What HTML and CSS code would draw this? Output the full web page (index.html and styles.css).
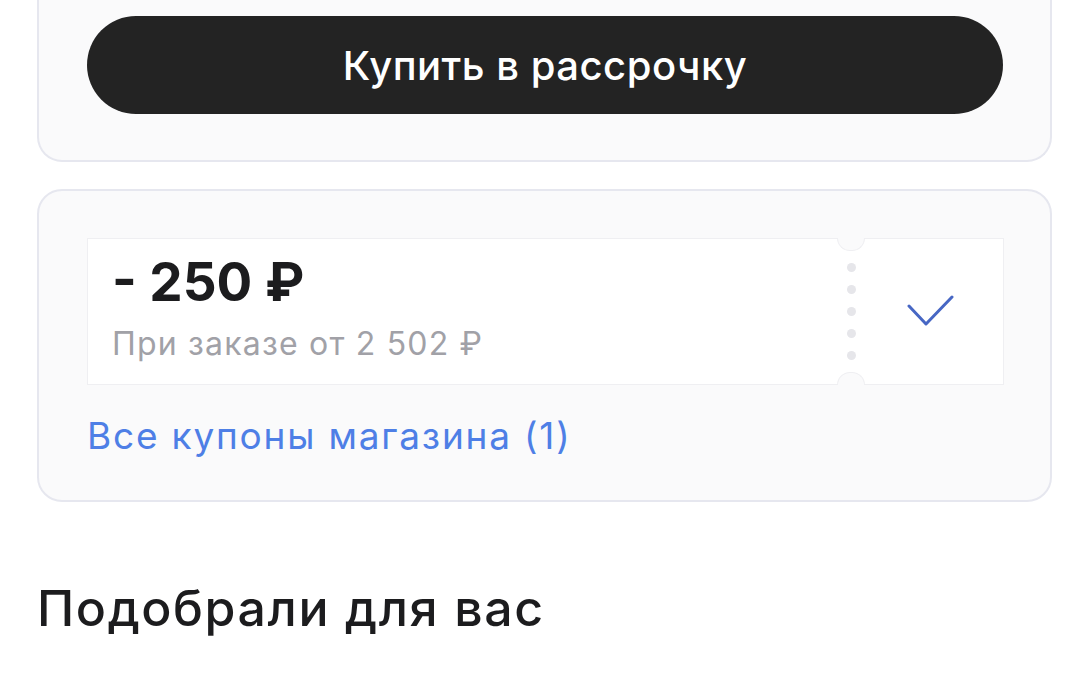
FILE: index.html
```html
<!DOCTYPE html>
<html lang="ru">
<head>
    <meta charset="UTF-8">
    <meta name="viewport" content="width=device-width, initial-scale=1.0">
    <title>Корзина</title>
    <link rel="stylesheet" href="styles.css">
</head>
<body>
<div class="page">
    <div class="card card-top">
        <button class="buy-btn">Купить в рассрочку</button>
    </div>

    <div class="card card-coupons">
        <div class="coupon">
            <div class="coupon-info">
                <div class="coupon-value">- 250 ₽</div>
                <div class="coupon-cond">При заказе от 2 502 ₽</div>
            </div>
            <div class="coupon-perf">
                <span class="dot"></span>
                <span class="dot"></span>
                <span class="dot"></span>
                <span class="dot"></span>
                <span class="dot"></span>
            </div>
            <div class="coupon-check">
                <svg width="48" height="36" viewBox="0 0 48 36" fill="none">
                    <path d="M3 12 L20 30 L46 3" stroke="#4767c4" stroke-width="3" stroke-linecap="round" stroke-linejoin="round"/>
                </svg>
            </div>
        </div>
        <a href="#" class="coupons-link">Все купоны магазина (1)</a>
    </div>

    <h2 class="section-title">Подобрали для вас</h2>
</div>
</body>
</html>
```

FILE: styles.css
```css
/* общие стили */
body {
    margin: 0;
    padding: 0;
    background: #ffffff;
    font-family: 'Inter', 'Noto Sans', sans-serif;
    color: #1c1c1e;
}

.page {
    padding: 0 38px 0 37px;
}

.card {
    background: #fafafb;
    border: 2px solid #e6e7ef;
    border-radius: 25px;
}

.card-top {
    border-top: none;
    border-top-left-radius: 0;
    border-top-right-radius: 0;
    padding: 16px 47px 46px 48px;
}

.buy-btn {
    display: block;
    width: 100%;
    height: 98px;
    border: none;
    border-radius: 49px;
    background: #232323;
    color: #ffffff;
    font-family: 'Inter', 'Noto Sans', sans-serif;
    font-size: 40px;
    font-weight: 500;
    letter-spacing: 0.5px;
    cursor: pointer;
}

.card-coupons {
    margin-top: 27px;
    padding: 47px 46px 41px 48px;
}

/* купон */
.coupon {
    position: relative;
    display: flex;
    background: #ffffff;
    border: 1px solid #efeff2;
    height: 145px;
}

.coupon-info {
    flex: 1;
    padding: 13px 24px 0;
}

.coupon-value {
    font-size: 53px;
    font-weight: 700;
    line-height: 60px;
    color: #1c1c1e;
}

.coupon-cond {
    margin-top: 12px;
    font-size: 32px;
    line-height: 40px;
    letter-spacing: 1.2px;
    color: #a1a1a7;
}

.coupon-perf {
    position: relative;
    width: 10px;
    display: flex;
    flex-direction: column;
    justify-content: center;
    align-items: center;
    gap: 13px;
}

/* вырезы купона */
.coupon-perf::before,
.coupon-perf::after {
    content: "";
    position: absolute;
    left: -9px;
    width: 26px;
    height: 12px;
    background: #fafafb;
    border: 1px solid #efeff2;
}

.coupon-perf::before {
    top: -1px;
    border-top: none;
    border-radius: 0 0 14px 14px;
}

.coupon-perf::after {
    bottom: -1px;
    border-bottom: none;
    border-radius: 14px 14px 0 0;
}

.dot {
    width: 9px;
    height: 9px;
    border-radius: 50%;
    background: #e6e6ea;
}

.coupon-check {
    width: 147px;
    display: flex;
    align-items: center;
    justify-content: center;
}

.coupons-link {
    display: block;
    margin-top: 28px;
    font-size: 37px;
    line-height: 46px;
    letter-spacing: 1.8px;
    color: #4e7fe6;
    text-decoration: none;
}

.section-title {
    margin: 76px 0 0;
    font-size: 50px;
    font-weight: 500;
    line-height: 60px;
    letter-spacing: 1.6px;
    color: #1c1c1e;
}
```
